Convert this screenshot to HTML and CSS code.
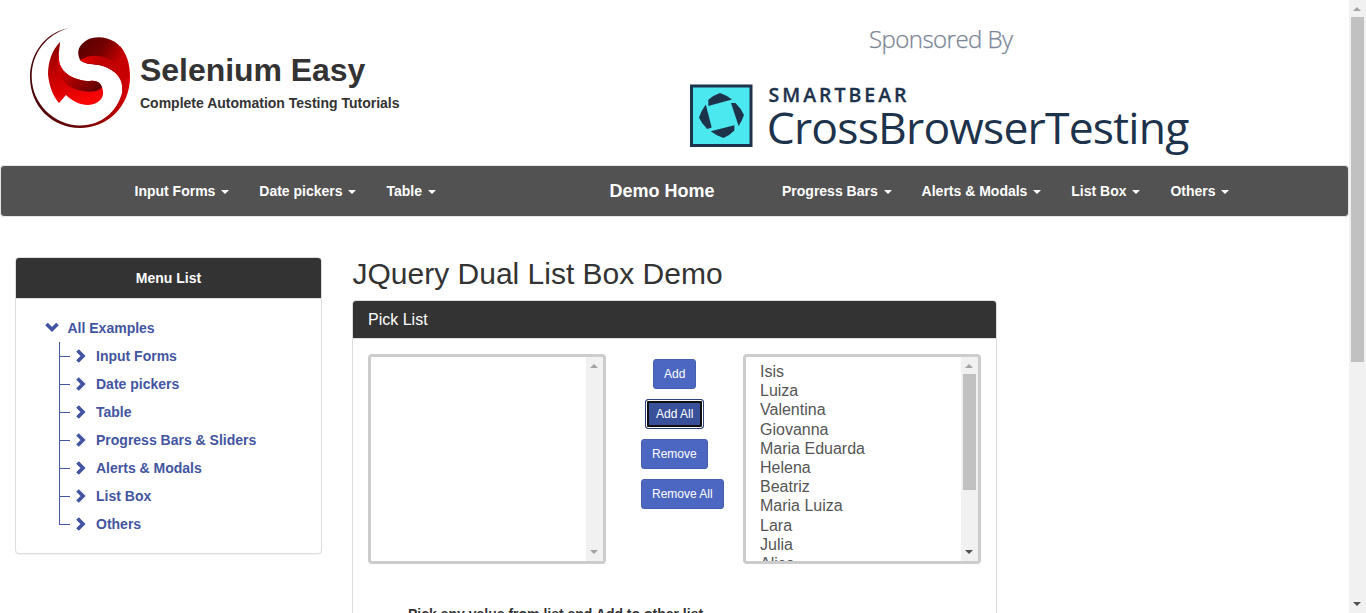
FILE: index.html
```html
<!DOCTYPE html>
<html lang="en">
<head>
<meta charset="utf-8">
<title>Selenium Easy - JQuery Dual List Box Demo</title>
<link rel="stylesheet" href="styles.css">
</head>
<body>
<div class="window">
<div class="page">
  <header class="header">
    <div class="brand">
      <svg class="logo" viewBox="0 0 100 100" width="100" height="100">
        <defs>
          <linearGradient id="ring" x1="0" y1="0.4" x2="1" y2="0.4">
            <stop offset="0" stop-color="#4a0608"/><stop offset="0.5" stop-color="#6a0508"/><stop offset="0.8" stop-color="#a80000"/><stop offset="1" stop-color="#e00000"/>
          </linearGradient>
          <linearGradient id="head" x1="0.1" y1="0" x2="0.9" y2="0.4">
            <stop offset="0" stop-color="#5a0000"/><stop offset="0.5" stop-color="#740000"/><stop offset="1" stop-color="#c60000"/>
          </linearGradient>
          <linearGradient id="fold" x1="0" y1="0" x2="1" y2="0.4">
            <stop offset="0" stop-color="#f00000"/><stop offset="0.4" stop-color="#c00000"/><stop offset="1" stop-color="#c80000"/>
          </linearGradient>
          <linearGradient id="tail" x1="0.2" y1="0" x2="0.5" y2="1">
            <stop offset="0" stop-color="#8a0000"/><stop offset="0.5" stop-color="#c80000"/><stop offset="1" stop-color="#fa0404"/>
          </linearGradient>
          <linearGradient id="shade" x1="0" y1="0" x2="1" y2="0.8">
            <stop offset="0" stop-color="#e00000"/><stop offset="0.45" stop-color="#b80000"/><stop offset="1" stop-color="#600000"/>
          </linearGradient>
        </defs>
        <path fill="url(#ring)" d="M39 0C16 4 0 25 0 49C0 78 22 100 50 100C77 100 100 79 100 49C100 36 97 26 90 18L70 37C86 42 96 51 92 65C87 83 72 97.500 50 97.500C24 97 2 76 1.700 49C1.500 25 17 6 39 0Z"/>
        <path fill="url(#head)" d="M50 32C46 23 49 17 57 12C64 8 76 8 85 14C94 20 99 32 99.500 50L90 50C85 42 76 38 68 37C60 36 54 36 50 32Z"/>
        <path fill="url(#fold)" d="M50 32C60 26 73 26 84 34C92 39 97 47 97 58L92 64C94 50 84 41 70 37C61 35.500 54 36 50 32Z"/>
        <path fill="url(#tail)" d="M30 14C22 22 18 34 18 46C19 58 23 68 29 75L36 67C42 73 50 77 58 77C69 76 74 70 73 63C72 56 68 52 60 53C45 53 30 45 29 32C28 25 30 20 30 14Z"/>
        <path fill="url(#shade)" d="M29 25C24 42 32 58 48 62C59 65 69 64 72 59C70 54 66 52 60 53C45 53 30 45 29 32Z"/>
      </svg>
      <div class="brand-text">
        <h1 class="brand-name">Selenium Easy</h1>
        <p class="brand-tagline">Complete Automation Testing Tutorials</p>
      </div>
    </div>
    <svg class="sponsor" width="520" height="165" viewBox="680 0 520 165">
      <text class="sponsor-by" x="869" y="48" textLength="144">Sponsored By</text>
      <rect x="691.500" y="86" width="59.500" height="59.500" fill="#4ce8ef" stroke="#1d334b" stroke-width="3"/>
      <g fill="#1d334b" transform="translate(690 84.3)">
        <path d="M18.3 21.700L18.300 15.400Q24 10.500 30 8.600Q36 10.500 42 15.300Z"/>
        <path d="M41 18.700H45.500Q51 24 54 30.700Q52 36.500 48.600 41.700Z"/>
        <path d="M20.700 47L44.400 41V46.300Q39.500 51.500 33.400 53.700Q27 52 20.700 47Z"/>
        <path d="M15.800 20.300L21.700 43.300L17.200 44.700Q11.500 39.500 9 33.300Q11.500 26 15.800 20.300Z"/>
      </g>
      <text class="sponsor-maker" x="768.500" y="102" textLength="138">SMARTBEAR</text>
      <text class="sponsor-name" x="766.800" y="144" textLength="422.500">CrossBrowserTesting</text>
    </svg>
  </header>

  <nav class="navbar">
    <ul class="nav nav-left">
      <li>Input Forms<i class="caret"></i></li>
      <li>Date pickers<i class="caret"></i></li>
      <li>Table<i class="caret"></i></li>
    </ul>
    <a class="nav-home">Demo Home</a>
    <ul class="nav">
      <li>Progress Bars<i class="caret"></i></li>
      <li>Alerts &amp; Modals<i class="caret"></i></li>
      <li>List Box<i class="caret"></i></li>
      <li>Others<i class="caret"></i></li>
    </ul>
  </nav>

  <div class="content">
    <aside class="panel sidebar">
      <div class="panel-heading sidebar-heading">Menu List</div>
      <div class="tree">
        <div class="tree-root"><svg class="chevron" width="14" height="12" viewBox="0 0 14 12"><path d="M1.500 2L7 7.500L12.500 2"/></svg>All Examples</div>
        <ul class="tree-list">
          <li><svg class="chevron" width="10" height="14" viewBox="0 0 10 14"><path d="M1.500 1.500L7 7L1.500 12.500"/></svg>Input Forms</li>
          <li><svg class="chevron" width="10" height="14" viewBox="0 0 10 14"><path d="M1.500 1.500L7 7L1.500 12.500"/></svg>Date pickers</li>
          <li><svg class="chevron" width="10" height="14" viewBox="0 0 10 14"><path d="M1.500 1.500L7 7L1.500 12.500"/></svg>Table</li>
          <li><svg class="chevron" width="10" height="14" viewBox="0 0 10 14"><path d="M1.500 1.500L7 7L1.500 12.500"/></svg>Progress Bars &amp; Sliders</li>
          <li><svg class="chevron" width="10" height="14" viewBox="0 0 10 14"><path d="M1.500 1.500L7 7L1.500 12.500"/></svg>Alerts &amp; Modals</li>
          <li><svg class="chevron" width="10" height="14" viewBox="0 0 10 14"><path d="M1.500 1.500L7 7L1.500 12.500"/></svg>List Box</li>
          <li><svg class="chevron" width="10" height="14" viewBox="0 0 10 14"><path d="M1.500 1.500L7 7L1.500 12.500"/></svg>Others</li>
        </ul>
      </div>
    </aside>

    <main class="main">
      <h2 class="title">JQuery Dual List Box Demo</h2>
      <section class="panel">
        <div class="panel-heading">Pick List</div>
        <div class="panel-body">
          <div class="picker">
            <div class="listbox">
              <div class="options"></div>
              <div class="scrollbar"><i class="arrow-up"></i><i class="arrow-down arrow-off"></i></div>
            </div>
            <div class="buttons">
              <button class="btn btn-add">Add</button>
              <button class="btn btn-add-all">Add All</button>
              <button class="btn">Remove</button>
              <button class="btn">Remove All</button>
            </div>
            <div class="listbox">
              <div class="options">
                <div>Isis</div><div>Luiza</div><div>Valentina</div><div>Giovanna</div><div>Maria Eduarda</div><div>Helena</div><div>Beatriz</div><div>Maria Luiza</div><div>Lara</div><div>Julia</div><div>Alice</div>
              </div>
              <div class="scrollbar"><i class="arrow-up"></i><i class="thumb"></i><i class="arrow-down"></i></div>
            </div>
          </div>
          <p class="hint">Pick any value from list and Add to other list</p>
        </div>
      </section>
    </main>
  </div>
</div>
<div class="scrollbar page-scrollbar"><i class="arrow-up"></i><i class="thumb"></i><i class="arrow-down"></i></div>
</div>
</body>
</html>
```
FILE: styles.css
```css
* { box-sizing: border-box; }
body { margin: 0; background: #fff; color: #333; font: 14px/20px "Liberation Sans", Arial, sans-serif; }
h1, h2, p, ul { margin: 0; padding: 0; }
ul { list-style: none; }

.window { display: flex; width: 1366px; height: 613px; overflow: hidden; }
.page { width: 1349px; height: 613px; overflow: hidden; }

.header { display: flex; justify-content: space-between; height: 165px; padding-right: 149px; }
.brand { display: flex; gap: 10px; padding: 28px 0 0 30px; }
.logo { display: block; }
.brand-text { padding-top: 24px; }
.brand-name { font-size: 32px; line-height: 36px; letter-spacing: -0.05px; white-space: nowrap; }
.brand-tagline { margin-top: 5px; font-weight: bold; white-space: nowrap; }
.sponsor { display: block; }
.sponsor text { font-family: "Open Sans", sans-serif; fill: #1d334b; }
.sponsor .sponsor-by { font-size: 24px; font-weight: 300; fill: #7c8595; stroke: #7c8595; stroke-width: .25px; }
.sponsor .sponsor-maker { font-size: 19.5px; font-weight: 600; stroke: #1d334b; stroke-width: .3px; }
.sponsor .sponsor-name { font-size: 44.5px; }

.navbar { display: flex; height: 52px; padding-left: 118.5px; border: 1px solid #e7e7e7; border-radius: 4px; background: #525252; color: #fff; font-weight: bold; }
.nav { display: flex; }
.nav li { display: flex; align-items: center; padding: 0 15px; white-space: nowrap; }
.nav-left { width: 490px; }
.nav-home { display: flex; align-items: center; width: 157.5px; font-size: 18px; }
.caret { width: 0; height: 0; margin-left: 5.9px; margin-top: 2px; border: 4px solid transparent; border-top-color: #fff; border-bottom: 0; }

.content { display: flex; align-items: flex-start; gap: 30px; padding: 40px 0 0 15px; }
.panel { border: 1px solid #ddd; border-radius: 4px; background: #fff; box-shadow: 0 1px 1px rgba(0, 0, 0, .05); }
.panel-heading { height: 38px; padding: 10px 15px; border-bottom: 1px solid #ddd; border-radius: 3px 3px 0 0; background: #333; color: #fff; font-size: 16px; line-height: 18px; }
.sidebar { width: 307px; height: 297px; }
.sidebar-heading { height: 41px; padding: 10px; font-size: 14px; font-weight: bold; line-height: 20px; text-align: center; }

.tree { padding: 15px 29px; color: #4355a0; font-weight: bold; }
.tree-root { display: flex; align-items: center; gap: 8.5px; height: 28px; }
.tree-list { margin-left: 14px; }
.tree-list li { position: relative; display: flex; align-items: center; gap: 10px; height: 28px; padding-left: 17px; }
.tree-list li::before { content: ""; position: absolute; left: 0; top: -14px; width: 10px; height: 28px; border-left: 1px solid #4355a0; border-bottom: 1px solid #4355a0; }
.tree-list li:first-child::before { top: 0; height: 14px; }
.chevron path { fill: none; stroke: #4355a0; stroke-width: 3.7; }

.main { width: 645px; }
.title { margin-top: -1px; height: 44px; padding-left: .5px; font-size: 30px; font-weight: 400; line-height: 36px; white-space: nowrap; }
.panel-body { padding: 15px; }
.picker { display: flex; }
.listbox { display: flex; width: 238px; height: 210px; border: 3px solid #ccc; border-radius: 4px; overflow: hidden; }
.options { flex: 1; padding: 5px 14px; color: #555; font-size: 16px; line-height: 19.2px; white-space: nowrap; }
.buttons { display: flex; flex-direction: column; align-items: flex-start; gap: 10px; width: 137px; padding: 5px 0 0 35px; }
.btn { height: 30px; padding: 5px 10px; border: 1px solid #4460ae; border-radius: 3px; background: #4b67c1; color: #fff; font: 12px/18px "Liberation Sans", Arial, sans-serif; white-space: nowrap; }
.btn-add { margin-left: 12px; }
.btn-add-all { margin-left: 4px; border-color: #2f4278; background: #39509b; box-shadow: inset 0 0 0 1px #fff, inset 0 0 0 3px #101010; }
.hint { margin: 40px 0 0 40px; font-weight: bold; }

.scrollbar { display: flex; flex-direction: column; align-items: center; width: 17px; background: #f1f1f1; }
.scrollbar i { flex: none; }
.arrow-up { margin: 7px 1px 6px 0; border: 4px solid transparent; border-top: 0; border-bottom-color: #a3a3a3; }
.arrow-down { margin: auto 1px 7px 0; border: 4px solid transparent; border-bottom: 0; border-top-color: #505050; }
.arrow-off { border-top-color: #a3a3a3; }
.thumb { width: 13px; height: 116px; background: #c1c1c1; }
.page-scrollbar { height: 613px; }
.page-scrollbar .thumb { height: 345px; }
```
